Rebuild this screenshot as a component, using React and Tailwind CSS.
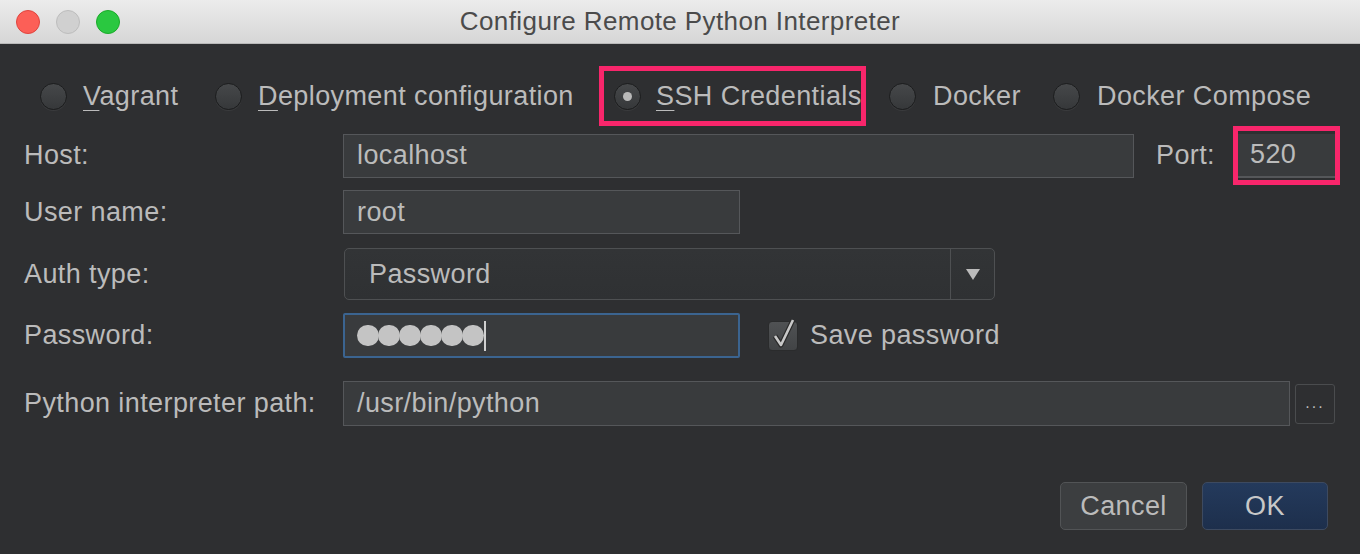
import React from "react";

const font = { fontFamily: '"Helvetica Neue", "Liberation Sans", Arial, sans-serif' };

/* ---- small pieces ---- */
function Radio({ checked }) {
  return (
    <span className="flex h-[27px] w-[27px] shrink-0 items-center justify-center rounded-full border border-[#1c1d1e] bg-gradient-to-b from-[#46484a] to-[#36383a] shadow-[0_1px_0_rgba(255,255,255,0.06)]">
      {checked && <span className="h-[9px] w-[9px] rounded-full bg-[#b9b9b9]" />}
    </span>
  );
}

function Mnemonic({ first, rest }) {
  return (
    <span className="whitespace-nowrap">
      <span className="underline decoration-1 underline-offset-[5px]">{first}</span>
      {rest}
    </span>
  );
}

function Label({ children }) {
  return <div className="w-[343px] shrink-0 whitespace-nowrap pl-[24px]">{children}</div>;
}

function Field({ className = "", children }) {
  return (
    <div
      className={
        "flex h-[44px] items-center whitespace-nowrap border border-[#55575a] bg-[#393b3d] px-[13px] " + className
      }
    >
      {children}
    </div>
  );
}

export default function App() {
  return (
    <div
      className="flex h-[554px] w-[1360px] flex-col overflow-hidden bg-[#2e2f31] text-[27px] tracking-[0.4px] text-[#bbbbbb]"
      style={font}
    >
      {/* title bar */}
      <div className="relative flex h-[44px] shrink-0 items-center justify-center border-b border-[#b9b9b9] bg-gradient-to-b from-[#ececec] to-[#d6d6d6]">
        <div className="absolute left-[16px] top-[10px] flex gap-[16px]">
          <span className="h-[24px] w-[24px] rounded-full border border-[#e0443e] bg-[#fc5f57]" />
          <span className="h-[24px] w-[24px] rounded-full border border-[#bdbdbd] bg-[#d0d0d0]" />
          <span className="h-[24px] w-[24px] rounded-full border border-[#1aab29] bg-[#2ac840]" />
        </div>
        <span className="text-[26px] tracking-[0.4px] text-[#4b4b4b]">
          Configure Remote Python Interpreter
        </span>
      </div>

      {/* interpreter kind */}
      <div className="mt-[22px] flex h-[60px] shrink-0 items-center pl-[40px]">
        <div className="flex w-[175px] items-center gap-[16px]">
          <Radio />
          <Mnemonic first="V" rest="agrant" />
        </div>
        <div className="flex w-[384px] items-center gap-[16px]">
          <Radio />
          <Mnemonic first="D" rest="eployment configuration" />
        </div>
        <div className="flex h-[60px] w-[267px] items-center gap-[15px] border-[5px] border-[#f8266b] pl-[10px]">
          <Radio checked />
          <Mnemonic first="S" rest="SH Credentials" />
        </div>
        <div className="ml-[23px] flex w-[164px] items-center gap-[17px]">
          <Radio />
          <span className="whitespace-nowrap">Docker</span>
        </div>
        <div className="flex items-center gap-[17px]">
          <Radio />
          <span className="whitespace-nowrap">Docker Compose</span>
        </div>
      </div>

      {/* host / port */}
      <div className="flex h-[59px] shrink-0 items-center">
        <Label>Host:</Label>
        <Field className="w-[791px]">localhost</Field>
        <span className="ml-[22px] w-[77px] whitespace-nowrap">Port:</span>
        <div className="flex h-[59px] w-[107px] items-center border-[5px] border-[#f8266b]">
          <div className="flex h-[44px] w-full items-center border-b-2 border-[#55575a] bg-[#393b3d] pl-[12px]">
            520
          </div>
        </div>
      </div>

      {/* user name */}
      <div className="mt-[5px] flex h-[44px] shrink-0 items-center">
        <Label>User name:</Label>
        <Field className="w-[397px]">root</Field>
      </div>

      {/* auth type */}
      <div className="mt-[14px] flex h-[52px] shrink-0 items-center">
        <Label>Auth type:</Label>
        <div className="ml-[1px] flex h-[52px] w-[651px] items-center rounded-[5px] border border-[#4e5052] bg-gradient-to-b from-[#323436] to-[#2f3133]">
          <span className="flex-1 pl-[24px]">Password</span>
          <span className="flex h-full w-[44px] items-center justify-center border-l border-[#4e5052]">
            <svg width="14" height="11" viewBox="0 0 14 11">
              <path d="M0 0 H14 L7 11 Z" fill="#bbbbbb" />
            </svg>
          </span>
        </div>
      </div>

      {/* password */}
      <div className="mt-[13px] flex h-[45px] shrink-0 items-center">
        <Label>Password:</Label>
        <div className="flex h-[45px] w-[397px] items-center rounded-[2px] border-2 border-[#3b6490] bg-[#393b3d] pl-[12px]">
          {[0, 1, 2, 3, 4, 5].map(i => (
            <span key={i} className="-mr-[1px] h-[21px] w-[22px] rounded-full bg-[#c4c4c4]" />
          ))}
          <span className="ml-[1px] h-[30px] w-[2px] bg-[#d0d0d0]" />
        </div>
        <div className="ml-[28px] flex items-center gap-[12px]">
          <span className="relative h-[30px] w-[30px] rounded-[4px] border border-[#2a2b2c] bg-gradient-to-b from-[#505254] to-[#424446]">
            <svg className="absolute -top-[5px] left-[3px]" width="26" height="32" viewBox="0 0 26 32">
              <path d="M3 19 L9 28 L21 3" fill="none" stroke="#2a2a2a" strokeWidth="5" strokeLinejoin="round" />
              <path d="M3 19 L9 28 L21 3" fill="none" stroke="#c8c8c8" strokeWidth="2.6" strokeLinejoin="round" />
            </svg>
          </span>
          <span className="whitespace-nowrap">Save password</span>
        </div>
      </div>

      {/* interpreter path */}
      <div className="mt-[23px] flex h-[45px] shrink-0 items-center">
        <Label>Python interpreter path:</Label>
        <Field className="h-[45px] w-[947px] px-[11px]">/usr/bin/python</Field>
        <button className="ml-[5px] flex h-[40px] w-[40px] items-start justify-center rounded-[3px] border border-[#4a4c4e] bg-[#2e2f31] pt-[6px] text-[16px] tracking-[2px] text-[#bbbbbb]">
          ...
        </button>
      </div>

      {/* actions */}
      <div className="mt-[56px] flex shrink-0 justify-end gap-[15px] pr-[32px]">
        <button className="h-[48px] w-[127px] rounded-[5px] border border-[#525456] bg-[#3c3e40] text-[27px] text-[#bbbbbb]">
          Cancel
        </button>
        <button className="h-[48px] w-[126px] rounded-[5px] border border-[#3d4a60] bg-gradient-to-b from-[#243a5c] to-[#1d2f4c] text-[27px] text-[#c8c8c8]">
          OK
        </button>
      </div>
    </div>
  );
}
